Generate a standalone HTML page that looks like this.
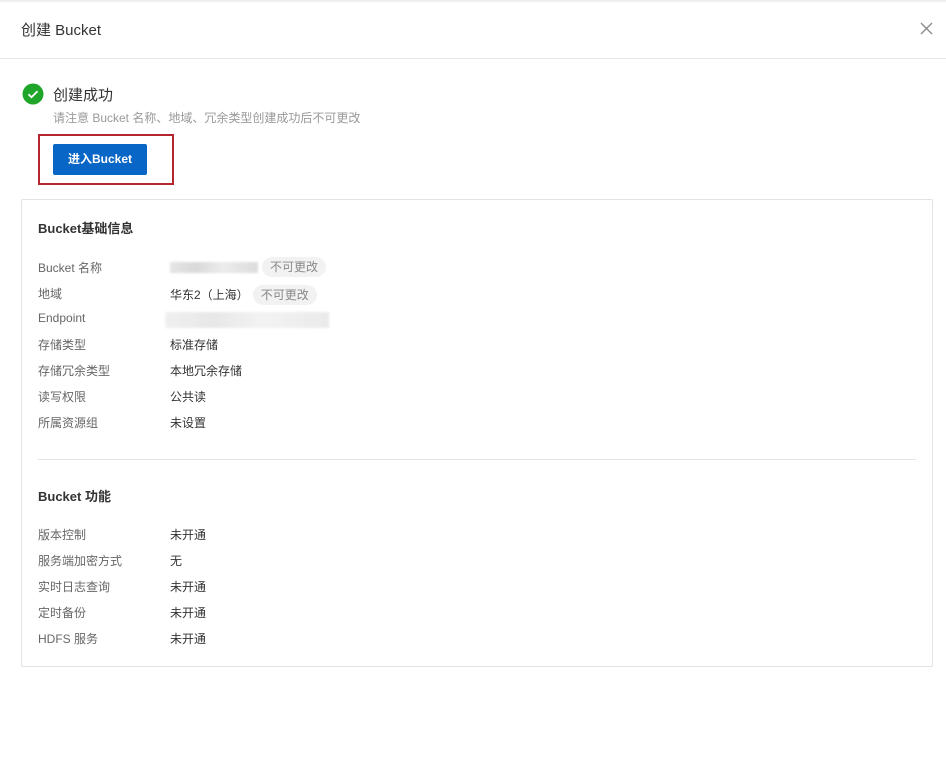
<!DOCTYPE html>
<html><head><meta charset="utf-8"><style>
*{margin:0;padding:0;box-sizing:border-box}
body{width:946px;height:765px;background:#fff;font-family:"Liberation Sans","Noto Sans CJK SC",sans-serif;color:#333;position:relative;overflow:hidden}
.a{position:absolute;white-space:nowrap}
.top{position:absolute;left:0;top:0;width:946px;height:3px;background:linear-gradient(#e8e8e8,#fff)}
.lbl{font-size:12px;color:#666;left:38px}
.val{font-size:12px;color:#333;left:170px}
.tag{display:inline-block;background:#f2f2f2;color:#888;border-radius:10px;padding:0 8px;height:20px;line-height:20px;font-size:12px}
.blur{position:absolute;background:linear-gradient(90deg,#e6e6e6,#d9d9d9 30%,#ececec 60%,#dcdcdc);filter:blur(1px)}
</style></head><body>
<div class="top"></div>
<div class="a" style="left:21px;top:19px;font-size:15px;color:#333">创建 Bucket</div>
<svg class="a" style="left:920px;top:22px" width="13" height="13" viewBox="0 0 13 13"><path d="M1 1L12 12M12 1L1 12" stroke="#888" stroke-width="1.3"/></svg>
<div class="a" style="left:0;top:58px;width:946px;height:1px;background:#e5e5e5"></div>
<svg class="a" style="left:22px;top:83px" width="22" height="22" viewBox="0 0 22 22"><circle cx="11" cy="11" r="10.5" fill="#20a52b"/><path d="M6.5 11.2l3 3 6-6" stroke="#fff" stroke-width="1.8" fill="none"/></svg>
<div class="a" style="left:53px;top:84px;font-size:15px;color:#333">创建成功</div>
<div class="a" style="left:53px;top:109px;font-size:12px;color:#999">请注意 Bucket 名称、地域、冗余类型创建成功后不可更改</div>
<div class="a" style="left:38px;top:134px;width:136px;height:51px;border:2px solid #b5252d"></div>
<div class="a" style="left:53px;top:144px;width:94px;height:31px;background:#0866c6;border-radius:2px;color:#fff;font-size:12px;font-weight:bold;text-align:center;line-height:31px">进入Bucket</div>
<div class="a" style="left:21px;top:199px;width:912px;height:468px;border:1px solid #e3e3e3;border-radius:2px"></div>
<div class="a" style="left:38px;top:218px;font-size:13px;font-weight:bold;color:#333">Bucket基础信息</div>
<div class="a lbl" style="top:259px">Bucket 名称</div>
<div class="blur" style="left:170px;top:262px;width:88px;height:11px"></div>
<div class="a" style="left:262px;top:257px"><span class="tag">不可更改</span></div>
<div class="a lbl" style="top:285px">地域</div>
<div class="a val" style="top:285px">华东2（上海）<span class="tag" style="margin-left:4px">不可更改</span></div>
<div class="a lbl" style="top:311px">Endpoint</div>
<div class="blur" style="left:165px;top:312px;width:164px;height:16px;opacity:.6"></div>
<div class="a lbl" style="top:336px">存储类型</div><div class="a val" style="top:336px">标准存储</div>
<div class="a lbl" style="top:362px">存储冗余类型</div><div class="a val" style="top:362px">本地冗余存储</div>
<div class="a lbl" style="top:388px">读写权限</div><div class="a val" style="top:388px">公共读</div>
<div class="a lbl" style="top:414px">所属资源组</div><div class="a val" style="top:414px">未设置</div>
<div class="a" style="left:38px;top:459px;width:878px;height:1px;background:#e5e5e5"></div>
<div class="a" style="left:38px;top:486px;font-size:13px;font-weight:bold;color:#333">Bucket 功能</div>
<div class="a lbl" style="top:526px">版本控制</div><div class="a val" style="top:526px">未开通</div>
<div class="a lbl" style="top:552px">服务端加密方式</div><div class="a val" style="top:552px">无</div>
<div class="a lbl" style="top:578px">实时日志查询</div><div class="a val" style="top:578px">未开通</div>
<div class="a lbl" style="top:604px">定时备份</div><div class="a val" style="top:604px">未开通</div>
<div class="a lbl" style="top:630px">HDFS 服务</div><div class="a val" style="top:630px">未开通</div>
</body></html>
